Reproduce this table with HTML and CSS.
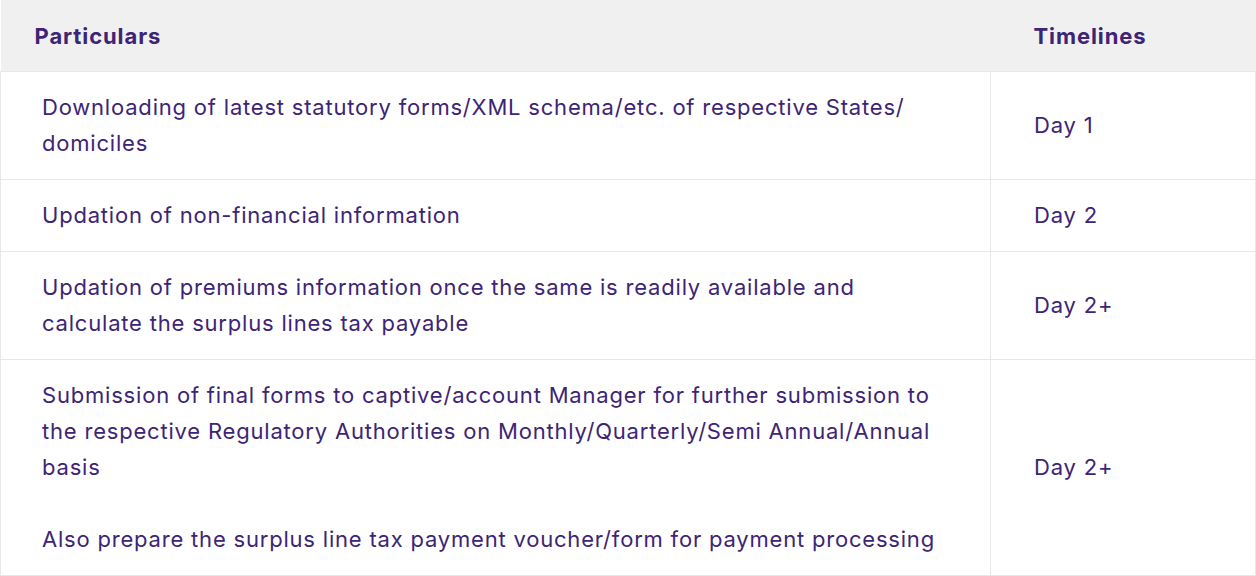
FILE: index.html
```html
<!DOCTYPE html>
<html>
<head>
<meta charset="utf-8">
<link rel="stylesheet" href="styles.css">
</head>
<body>
<table class="tl">
  <colgroup><col class="c1"><col class="c2"></colgroup>
  <thead>
    <tr><th class="h1">Particulars</th><th class="h2">Timelines</th></tr>
  </thead>
  <tbody>
    <tr><td>Downloading of latest statutory forms/XML schema/etc. of respective States/<br>domiciles</td><td class="t">Day 1</td></tr>
    <tr><td>Updation of non-financial information</td><td class="t">Day 2</td></tr>
    <tr><td>Updation of premiums information once the same is readily available and<br>calculate the surplus lines tax payable</td><td class="t">Day 2+</td></tr>
    <tr><td>Submission of final forms to captive/account Manager for further submission to<br>the respective Regulatory Authorities on Monthly/Quarterly/Semi Annual/Annual<br>basis<br><br>Also prepare the surplus line tax payment voucher/form for payment processing</td><td class="t">Day 2+</td></tr>
  </tbody>
</table>
</body>
</html>
```
FILE: styles.css
```css
html, body { margin: 0; padding: 0; background: #fff; }
body { font-family: Inter, "Noto Sans", sans-serif; color: #3d2475; }
.tl { width: 1255px; border-collapse: collapse; table-layout: fixed; }
.c1 { width: 990px; }
.c2 { width: 265px; }
.tl th { background: #f0f0f0; height: 71px; padding: 0; text-align: left; font-weight: 700; font-size: 22px; letter-spacing: 0.9px; color: #3d2475; }
.tl th.h1 { padding-left: 34px; }
.tl th.h2 { padding-left: 43px; }
.tl td { border: 1.5px solid #e8e8e8; padding: 17px 40px 18px 41px; font-size: 22px; letter-spacing: 0.8px; line-height: 36px; vertical-align: middle; }
.tl td.t { padding-left: 43px; }
```
